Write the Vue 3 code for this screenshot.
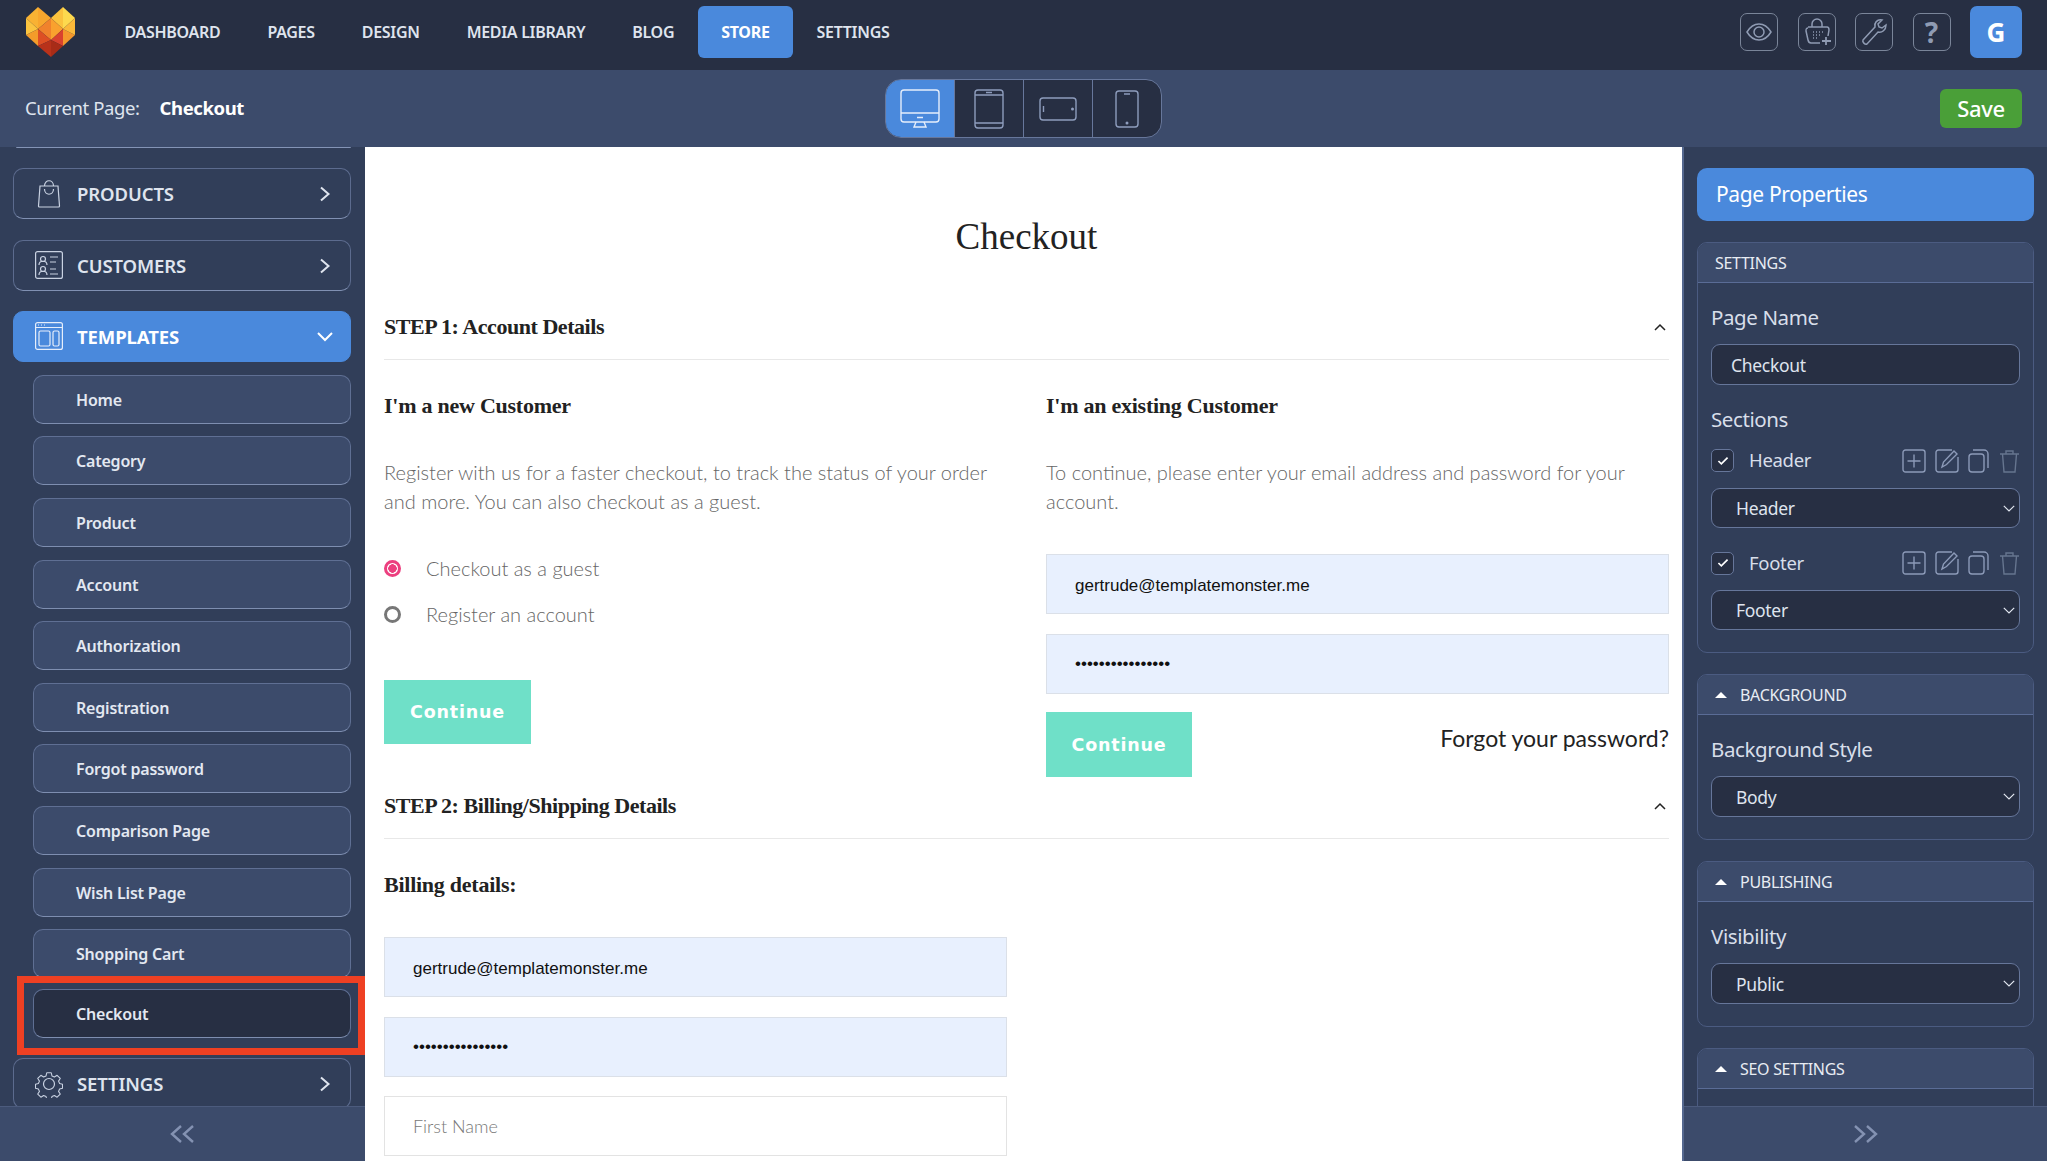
<script setup>
const navItems = ['DASHBOARD', 'PAGES', 'DESIGN', 'MEDIA LIBRARY', 'BLOG', 'STORE', 'SETTINGS']
const templates = ['Home', 'Category', 'Product', 'Account', 'Authorization', 'Registration', 'Forgot password', 'Comparison Page', 'Wish List Page', 'Shopping Cart', 'Checkout']
const logoFacets = [
  ['23,7 11,18 23,29', '#f9b233'], ['23,7 36,18 23,29', '#f8a62d'], ['48,7 36,18 48,29', '#fbc23d'], ['48,7 60,18 48,29', '#fdd94e'],
  ['11,18 23,29 11,35', '#fbc43f'], ['11,35 23,29 23,46', '#f39c2a'], ['23,29 36,18 36,40', '#f0822c'], ['36,18 48,29 36,40', '#f9a12e'],
  ['23,29 36,40 23,46', '#dd4f24'], ['48,29 36,40 48,46', '#d9412e'], ['48,29 60,35 48,46', '#f4972c'], ['48,29 60,18 60,35', '#fbb93a'],
  ['23,46 36,40 36,57', '#b8321a'], ['36,40 48,46 36,57', '#a82c17']
]
const sections = ['Header', 'Footer']
const propCards = [
  { title: 'BACKGROUND', label: 'Background Style', value: 'Body' },
  { title: 'PUBLISHING', label: 'Visibility', value: 'Public' }
]
</script>

<template>
  <div class="app">
    <header class="topbar">
      <svg class="logo" viewBox="10 6 51 52" width="51" height="52">
        <polygon v-for="f in logoFacets" :key="f[0]" :points="f[0]" :fill="f[1]" />
      </svg>
      <nav class="nav">
        <a v-for="item in navItems" :key="item" class="nav-item" :class="{ active: item === 'STORE' }">{{ item }}</a>
      </nav>
      <div class="tools">
        <span class="tool">
          <svg viewBox="0 0 38 38" width="38" height="38" fill="none" stroke="#8f9bb3" stroke-width="1.5"><path d="M7 19c3-5 7-8 12-8s9 3 12 8c-3 5-7 8-12 8s-9-3-12-8z"/><circle cx="19" cy="19" r="5"/></svg>
        </span>
        <span class="tool">
          <svg viewBox="0 0 38 38" width="38" height="38" fill="none" stroke="#8f9bb3" stroke-width="1.5"><path d="M14 14v-3a5 5 0 0 1 10 0v3"/><path d="M10 15c-2 0-2 1-2 3l2 9c.4 2 1.500 3 3 3h9"/><path d="M10 14h19c1.500 0 2 1 2 3l-1 6"/><path d="M28 24v8M24 28h9" stroke-width="1.800"/><path d="M15 19h1M18 19h1M21 19h1M24 19h1M15 22h1M18 22h1M21 22h1M15 25h1M18 25h1"/></svg>
        </span>
        <span class="tool">
          <svg viewBox="0 0 38 38" width="38" height="38" fill="none" stroke="#8f9bb3" stroke-width="1.5"><path d="M8 27l12-13c-1-4 2-8 7-7l-4 4 1 3 3 1 4-3c0 5-4 8-8 7L12 31c-2 1-5-2-4-4z"/></svg>
        </span>
        <span class="tool tool-q">?</span>
        <span class="avatar">G</span>
      </div>
    </header>

    <div class="subbar">
      <div class="current">
        <span class="current-label">Current Page:</span>
        <strong class="current-name">Checkout</strong>
      </div>
      <div class="devices">
        <span class="device on">
          <svg viewBox="0 0 40 40" width="40" height="40" fill="none" stroke="#e6eefb" stroke-width="1.400"><rect x="1" y="1" width="38" height="32" rx="3"/><path d="M1 24h38M17 28.500h6M16 33l-2 5h12l-2-5"/></svg>
        </span>
        <span class="device">
          <svg viewBox="0 0 30 40" width="30" height="40" fill="none" stroke="#8e9dbd" stroke-width="1.400"><rect x="1" y="1" width="28" height="38" rx="3"/><path d="M1 6h28M1 34h28M12 3.500h6"/></svg>
        </span>
        <span class="device">
          <svg viewBox="0 0 38 24" width="38" height="24" fill="none" stroke="#8e9dbd" stroke-width="1.400"><rect x="1" y="1" width="36" height="22" rx="3"/><path d="M4.500 9v6"/><circle cx="33.500" cy="12" r=".8"/></svg>
        </span>
        <span class="device">
          <svg viewBox="0 0 24 38" width="24" height="38" fill="none" stroke="#8e9dbd" stroke-width="1.400"><rect x="1" y="1" width="22" height="36" rx="3"/><path d="M9 4h6"/><circle cx="12" cy="33" r=".8"/></svg>
        </span>
      </div>
      <button class="save">Save</button>
    </div>

    <div class="workspace">
      <aside class="panel left">
        <div class="list">
          <div class="clipped"></div>
          <div class="menu">
            <svg viewBox="0 0 24 28" width="24" height="28" fill="none" stroke="#c9d2e2" stroke-width="1.200"><path d="M3 6h18l1.500 20c0 .7-.5 1-1 1H2.500c-.5 0-1-.3-1-1z"/><path d="M7.500 6c0-7 9-7 9 0M7.500 9c0 7 9 7 9 0"/></svg>
            <span class="menu-text">PRODUCTS</span>
            <svg class="chev" viewBox="0 0 12 16" width="12" height="16" fill="none" stroke="#dfe4ee" stroke-width="2"><path d="M2 1.500L9.500 8 2 14.500"/></svg>
          </div>
          <div class="menu">
            <svg viewBox="0 0 28 28" width="28" height="28" fill="none" stroke="#c9d2e2" stroke-width="1.200"><rect x=".6" y=".6" width="26.800" height="26.800" rx="2"/><circle cx="8" cy="8" r="2.500"/><path d="M4 14c0-5 8-5 8 0M15 6h8M15 11h6"/><circle cx="8" cy="18" r="2.500"/><path d="M4 24c0-5 8-5 8 0M15 18h6M15 23h8"/></svg>
            <span class="menu-text">CUSTOMERS</span>
            <svg class="chev" viewBox="0 0 12 16" width="12" height="16" fill="none" stroke="#dfe4ee" stroke-width="2"><path d="M2 1.500L9.500 8 2 14.500"/></svg>
          </div>
          <div class="menu open">
            <svg viewBox="0 0 28 28" width="28" height="28" fill="none" stroke="#e6eefb" stroke-width="1.200"><rect x=".6" y=".6" width="26.800" height="26.800" rx="2"/><path d="M1 5.500h26M3 3h1M6 3h1M9 3h1"/><rect x="4" y="9" width="11" height="15" rx="1.500"/><rect x="18" y="9" width="6" height="15" rx="1.500"/></svg>
            <span class="menu-text">TEMPLATES</span>
            <svg class="chev chev-down" viewBox="0 0 16 12" width="16" height="12" fill="none" stroke="#fff" stroke-width="2"><path d="M1 2l7 7 7-7"/></svg>
          </div>
          <div class="sublist">
            <div v-for="t in templates" :key="t" class="subitem" :class="{ current: t === 'Checkout' }">{{ t }}</div>
          </div>
          <div class="menu">
            <svg viewBox="0 0 28 28" width="28" height="28" fill="none" stroke="#c9d2e2" stroke-width="1.200"><circle cx="14" cy="14" r="5.500"/><path d="M11.500 1.500h5l.8 3.500 2.700 1.200 3-1.900 3.500 3.500-1.900 3 1.200 2.700 3.200.8v4.400l-3.200.8-1.200 2.700 1.900 3-3.500 3.500-3-1.900-2.700 1.200-.8 2.700h-5l-.8-2.700-2.700-1.200-3 1.900-3.500-3.500 1.900-3-1.200-2.700-3.200-.8v-4.400l3.200-.8 1.200-2.700-1.900-3 3.500-3.500 3 1.900 2.700-1.200z" transform="translate(1.400 1.400) scale(.9)" stroke-linejoin="round"/></svg>
            <span class="menu-text">SETTINGS</span>
            <svg class="chev" viewBox="0 0 12 16" width="12" height="16" fill="none" stroke="#dfe4ee" stroke-width="2"><path d="M2 1.500L9.500 8 2 14.500"/></svg>
          </div>
        </div>
        <div class="collapse">
          <svg class="shift-left" viewBox="0 0 26 20" width="26" height="20" fill="none" stroke="#8492b2" stroke-width="2.400"><path d="M12 2L3 10l9 8M24 2l-9 8 9 8"/></svg>
        </div>
      </aside>

      <main class="page">
        <h1 class="page-title">Checkout</h1>
        <div class="step">
          <h2>STEP 1: Account Details</h2>
          <svg viewBox="0 0 12 8" width="12" height="8" fill="none" stroke="#222" stroke-width="1.500"><path d="M1 7l5-5 5 5"/></svg>
        </div>
        <div class="columns">
          <section class="col">
            <h3>I'm a new Customer</h3>
            <p>Register with us for a faster checkout, to track the status of your order and more. You can also checkout as a guest.</p>
            <div class="radios">
              <label class="radio"><span class="dot checked"></span>Checkout as a guest</label>
              <label class="radio"><span class="dot"></span>Register an account</label>
            </div>
            <button class="continue">Continue</button>
          </section>
          <section class="col">
            <h3>I'm an existing Customer</h3>
            <p>To continue, please enter your email address and password for your account.</p>
            <div class="fields">
              <input class="field filled" value="gertrude@templatemonster.me" />
              <input class="field filled" type="password" value="passwordpassword" />
            </div>
            <div class="login-row">
              <button class="continue tall">Continue</button>
              <a class="forgot">Forgot your password?</a>
            </div>
          </section>
        </div>
        <div class="step">
          <h2>STEP 2: Billing/Shipping Details</h2>
          <svg viewBox="0 0 12 8" width="12" height="8" fill="none" stroke="#222" stroke-width="1.500"><path d="M1 7l5-5 5 5"/></svg>
        </div>
        <section class="col billing">
          <h3>Billing details:</h3>
          <div class="fields">
            <input class="field filled" value="gertrude@templatemonster.me" />
            <input class="field filled" type="password" value="passwordpassword" />
            <input class="field" placeholder="First Name" />
          </div>
        </section>
      </main>

      <aside class="panel right">
        <div class="props">
          <div class="props-title">Page Properties</div>
          <div class="card">
            <div class="card-head">SETTINGS</div>
            <div class="card-body">
              <div class="prop-label">Page Name</div>
              <input class="dark-input" value="Checkout" />
              <div class="prop-label sections-label">Sections</div>
              <div v-for="s in sections" :key="s" class="section-block">
                <div class="section-row">
                  <span class="check">
                    <svg viewBox="0 0 14 12" width="12" height="10" fill="none" stroke="#fff" stroke-width="2"><path d="M1.500 6l3.500 3.500L12.500 2"/></svg>
                  </span>
                  <span class="section-name">{{ s }}</span>
                  <span class="section-icons">
                    <svg viewBox="0 0 24 24" width="24" height="24" fill="none" stroke="#8c9ab8" stroke-width="1.400"><rect x="1" y="1" width="22" height="22" rx="2.500"/><path d="M12 5.500v13M5.500 12h13"/></svg>
                    <svg viewBox="0 0 24 24" width="24" height="24" fill="none" stroke="#8c9ab8" stroke-width="1.400"><path d="M17 1H3.500A2.500 2.500 0 0 0 1 3.500v17A2.500 2.500 0 0 0 3.500 23h17a2.500 2.500 0 0 0 2.500-2.500V8"/><path d="M7 18l1.500-5L19 2l3 3-10.500 10.500z"/></svg>
                    <svg viewBox="0 0 21 24" width="21" height="24" fill="none" stroke="#8c9ab8" stroke-width="1.400"><rect x="1" y="5" width="15" height="18" rx="3"/><path d="M5 1h11a4 4 0 0 1 4 4v14"/></svg>
                    <svg class="trash" viewBox="0 0 21 24" width="21" height="24" fill="none" stroke="#66758f" stroke-width="1.400"><path d="M1 5h19M7 5V2h7v3M3.500 5L5 23h11l1.500-18"/></svg>
                  </span>
                </div>
                <div class="select-wrap short">
                  <select class="dark-select"><option>{{ s }}</option></select>
                  <svg class="select-arrow" viewBox="0 0 12 7" width="12" height="7" fill="none" stroke="#dfe4ee" stroke-width="1.200"><path d="M.8 .8L6 6l5.200-5.200"/></svg>
                </div>
              </div>
            </div>
          </div>
          <div v-for="c in propCards" :key="c.title" class="card">
            <div class="card-head"><i class="caret"></i>{{ c.title }}</div>
            <div class="card-body">
              <div class="prop-label">{{ c.label }}</div>
              <div class="select-wrap">
                <select class="dark-select"><option>{{ c.value }}</option></select>
                <svg class="select-arrow" viewBox="0 0 12 7" width="12" height="7" fill="none" stroke="#dfe4ee" stroke-width="1.200"><path d="M.8 .8L6 6l5.200-5.200"/></svg>
              </div>
            </div>
          </div>
          <div class="card">
            <div class="card-head"><i class="caret"></i>SEO SETTINGS</div>
            <div class="card-body seo"></div>
          </div>
        </div>
        <div class="collapse">
          <svg viewBox="0 0 26 20" width="26" height="20" fill="none" stroke="#8492b2" stroke-width="2.400"><path d="M2 2l9 8-9 8M14 2l9 8-9 8"/></svg>
        </div>
      </aside>
    </div>
  </div>
</template>

<style>
html, body { margin: 0; overflow: hidden; background: #313e59; }
</style>

<style scoped>
* { box-sizing: border-box; }
.app { width: 2047px; height: 1161px; display: flex; flex-direction: column; overflow: hidden; font-family: "Noto Sans", sans-serif; color: #dfe4ee; }

.topbar { height: 70px; flex: none; background: #272f43; display: flex; align-items: center; padding: 0 25px 6px; }
.logo { flex: none; display: block; }
.nav { display: flex; margin-left: 25px; }
.nav-item { height: 52px; padding: 0 23.500px; display: flex; align-items: center; font-size: 16px; font-weight: 600; letter-spacing: -.3px; color: #dfe4ee; border-radius: 6px; }
.nav-item.active { background: #4a89dc; color: #fff; font-weight: 700; }
.tools { margin-left: auto; display: flex; align-items: center; gap: 19.500px; }
.tool { width: 38px; height: 38px; border: 1px solid #7a8599; border-radius: 7px; display: flex; align-items: center; justify-content: center; overflow: hidden; }
.tool svg { flex: none; margin: -1px; }
.tool-q { font-size: 28px; font-weight: 700; color: #8f9bb3; }
.avatar { width: 52px; height: 52px; border-radius: 7px; background: #4a89dc; color: #fff; font-size: 26px; font-weight: 700; display: flex; align-items: center; justify-content: center; }

.subbar { height: 77px; flex: none; background: #3c4b6b; position: relative; display: flex; align-items: center; justify-content: space-between; padding: 0 25px; }
.current { font-size: 18.500px; display: flex; gap: 20px; letter-spacing: -.4px; margin-top: -2px; }
.current-label { color: #dfe4ee; }
.current-name { color: #fff; font-weight: 700; }
.devices { position: absolute; left: 885px; top: 9px; display: flex; width: 277px; height: 59px; border: 1px solid #67779b; border-radius: 16px; overflow: hidden; background: #272f43; }
.device { flex: 1; display: flex; align-items: center; justify-content: center; border-left: 1px solid #67779b; }
.device:first-child { border-left: 0; }
.device.on { background: #4a89dc; }
.save { width: 82px; height: 39px; border: 0; border-radius: 6px; background: #4a9f38; color: #fff; font-family: inherit; font-size: 22px; font-weight: 500; padding: 0 0 2px; letter-spacing: -.3px; }

.workspace { flex: 1; min-height: 0; display: flex; }
.panel { flex: none; display: flex; flex-direction: column; background: #313e59; min-height: 0; }
.panel.left { width: 365px; }
.panel.right { width: 365px; border-left: 2px solid #55688f; }
.list { flex: 1; min-height: 0; overflow: hidden; display: flex; flex-direction: column; gap: 20.300px; padding: 0 14px 0 13px; }
.clipped { height: 1px; flex: none; background: #8494b6; border-radius: 0 0 6px 6px; margin: 0 0 0 3px; }
.menu { flex: none; height: 51px; display: flex; align-items: center; border: 1px solid #5c6b8e; border-bottom-color: #8090b2; border-radius: 10px; padding-left: 21px; position: relative; }
.menu > svg:first-child { width: 28px; flex: none; }
.menu-text { margin-left: 14px; font-size: 18.500px; font-weight: 600; color: #dfe4ee; letter-spacing: -.1px; }
.chev { position: absolute; right: 19px; top: 17px; }
.chev-down { right: 17px; top: 19px; }
.menu.open { background: #4a89dc; border-color: #4a89dc; }
.menu.open .menu-text { color: #fff; font-weight: 700; }
.sublist { display: flex; flex-direction: column; gap: 12.600px; padding-left: 20px; margin-top: -7.400px; flex: none; }
.subitem { height: 49px; flex: none; display: flex; align-items: center; padding: 1px 0 0 42px; background: #3c4b6b; border: 1px solid #5f6f93; border-bottom-color: #7e8eb0; border-radius: 10px; font-size: 16px; font-weight: 600; letter-spacing: -.2px; color: #e3e8f1; position: relative; }
.subitem.current { background: #272f43; }
.subitem.current::after { content: ""; position: absolute; left: -17px; right: -15px; top: -14px; bottom: -18px; border: 7px solid #ee4023; pointer-events: none; }
.collapse { height: 55px; flex: none; background: #3c4b6b; border-top: 1px solid #4c5b7d; display: flex; align-items: center; justify-content: center; position: relative; }
.shift-left { margin-right: 2px; }

.page { flex: 1; min-width: 0; background: #fff; padding: 0 13px 0 19px; overflow: hidden; color: #222; }
.page-title { margin: 65px 0 36px; height: 50px; line-height: 50px; text-align: center; font-family: "Liberation Serif", serif; font-weight: 400; font-size: 37px; color: #222; }
.step { display: flex; align-items: center; justify-content: space-between; padding: 17px 3px 20px 0; border-bottom: 1px solid #e8e8e8; }
.step h2 { margin: 0; height: 24px; line-height: 24px; font-family: "Liberation Serif", serif; font-weight: 700; font-size: 22px; letter-spacing: -.45px; color: #222; }
.columns { display: grid; grid-template-columns: 623px 623px; gap: 39px; }
.col h3 { margin: 34px 0 0; height: 24px; line-height: 24px; font-family: "Liberation Serif", serif; font-weight: 700; font-size: 22px; letter-spacing: -.25px; color: #222; }
.col p { margin: 40px 0 0; font-family: Lato, sans-serif; font-weight: 300; font-size: 20px; line-height: 29px; color: #666; height: 58px; }
.radios { margin-top: 38px; display: flex; flex-direction: column; gap: 18px; }
.radio { height: 28px; display: flex; align-items: center; font-family: Lato, sans-serif; font-weight: 300; font-size: 20px; color: #666; }
.dot { width: 17px; height: 17px; border-radius: 50%; border: 3px solid #777; margin-right: 25px; flex: none; }
.dot.checked { border-color: #ec3f7f; background: radial-gradient(circle, #ec3f7f 0 4px, #fff 4.500px); }
.continue { display: block; margin-top: 52px; width: 147px; height: 64px; border: 0; background: #6fe0c8; color: #fff; font-family: "DejaVu Sans", sans-serif; font-weight: 700; font-size: 17.500px; letter-spacing: .8px; padding: 0; }
.continue.tall { margin: 0; width: 146px; height: 65px; }
.fields { margin-top: 38px; display: flex; flex-direction: column; gap: 19.500px; }
.field { display: block; width: 100%; height: 60px; border: 1px solid #e3e3e3; background: #fff; padding: 3px 28px 0; font-family: "Liberation Sans", sans-serif; font-size: 17px; color: #111; outline: 0; border-radius: 0; }
.field[type="password"] { padding-top: 0; }
.field::placeholder { color: #777; font-family: Lato, sans-serif; font-weight: 300; font-size: 18px; opacity: 1; }
.field.filled { background: #e8f0fe; border-color: #dbe0e8; }
.login-row { margin-top: 18.500px; display: flex; justify-content: space-between; align-items: flex-start; }
.forgot { margin-top: 10px; font-family: Lato, sans-serif; font-size: 23px; line-height: 32px; color: #222; }
.billing { width: 623px; }
.billing .fields { margin-top: 40px; }

.props { flex: 1; min-height: 0; overflow: hidden; padding: 21px 13px 0 13px; display: flex; flex-direction: column; gap: 21px; }
.props-title { height: 53px; flex: none; background: #4a89dc; border-radius: 10px; display: flex; align-items: center; padding: 0 0 2px 19px; color: #fff; font-size: 21px; letter-spacing: -.35px; }
.card { flex: none; border: 1px solid #4b5b81; border-radius: 10px; overflow: hidden; }
.card-head { height: 40px; background: #3c4b6b; border-bottom: 1px solid #5a6c96; display: flex; align-items: center; padding-left: 17px; font-size: 16px; letter-spacing: -.3px; color: #e8ecf3; }
.caret { width: 0; height: 0; border: 6px solid transparent; border-top: 0; border-bottom: 6px solid #fff; margin-right: 13px; }
.card-body { padding: 24px 13px 22px; }
.card-body.seo { height: 60px; padding: 0; }
.prop-label { height: 26px; line-height: 26px; font-size: 20.500px; letter-spacing: -.4px; color: #d8deea; margin-top: -3px; margin-bottom: 14px; }
.sections-label { margin: 21px 0 17px; }
.dark-input, .dark-select { display: block; width: 100%; height: 41px; background: #272f43; border: 1px solid #66769a; border-radius: 9px; color: #dfe4ee; font-family: inherit; font-size: 17.500px; letter-spacing: -.3px; padding: 0 19px; outline: 0; }
.dark-select { appearance: none; -webkit-appearance: none; padding: 0 24px 0 24px; }
.select-wrap { position: relative; }
.short .dark-select { height: 40px; }
.select-arrow { position: absolute; right: 5px; top: 17px; pointer-events: none; }
.section-block + .section-block { margin-top: 24px; }
.section-row { height: 23px; display: flex; align-items: center; margin-bottom: 15.500px; }
.check { width: 23px; height: 23px; flex: none; background: #272f43; border: 1px solid #66769a; border-radius: 5px; display: flex; align-items: center; justify-content: center; }
.section-name { margin-left: 15px; margin-top: -2px; font-size: 18.500px; letter-spacing: -.3px; color: #d8deea; }
.section-icons { margin-left: auto; display: flex; gap: 9px; align-items: center; }
.section-icons svg { display: block; }
.section-icons .trash { margin-left: 1px; }
</style>
